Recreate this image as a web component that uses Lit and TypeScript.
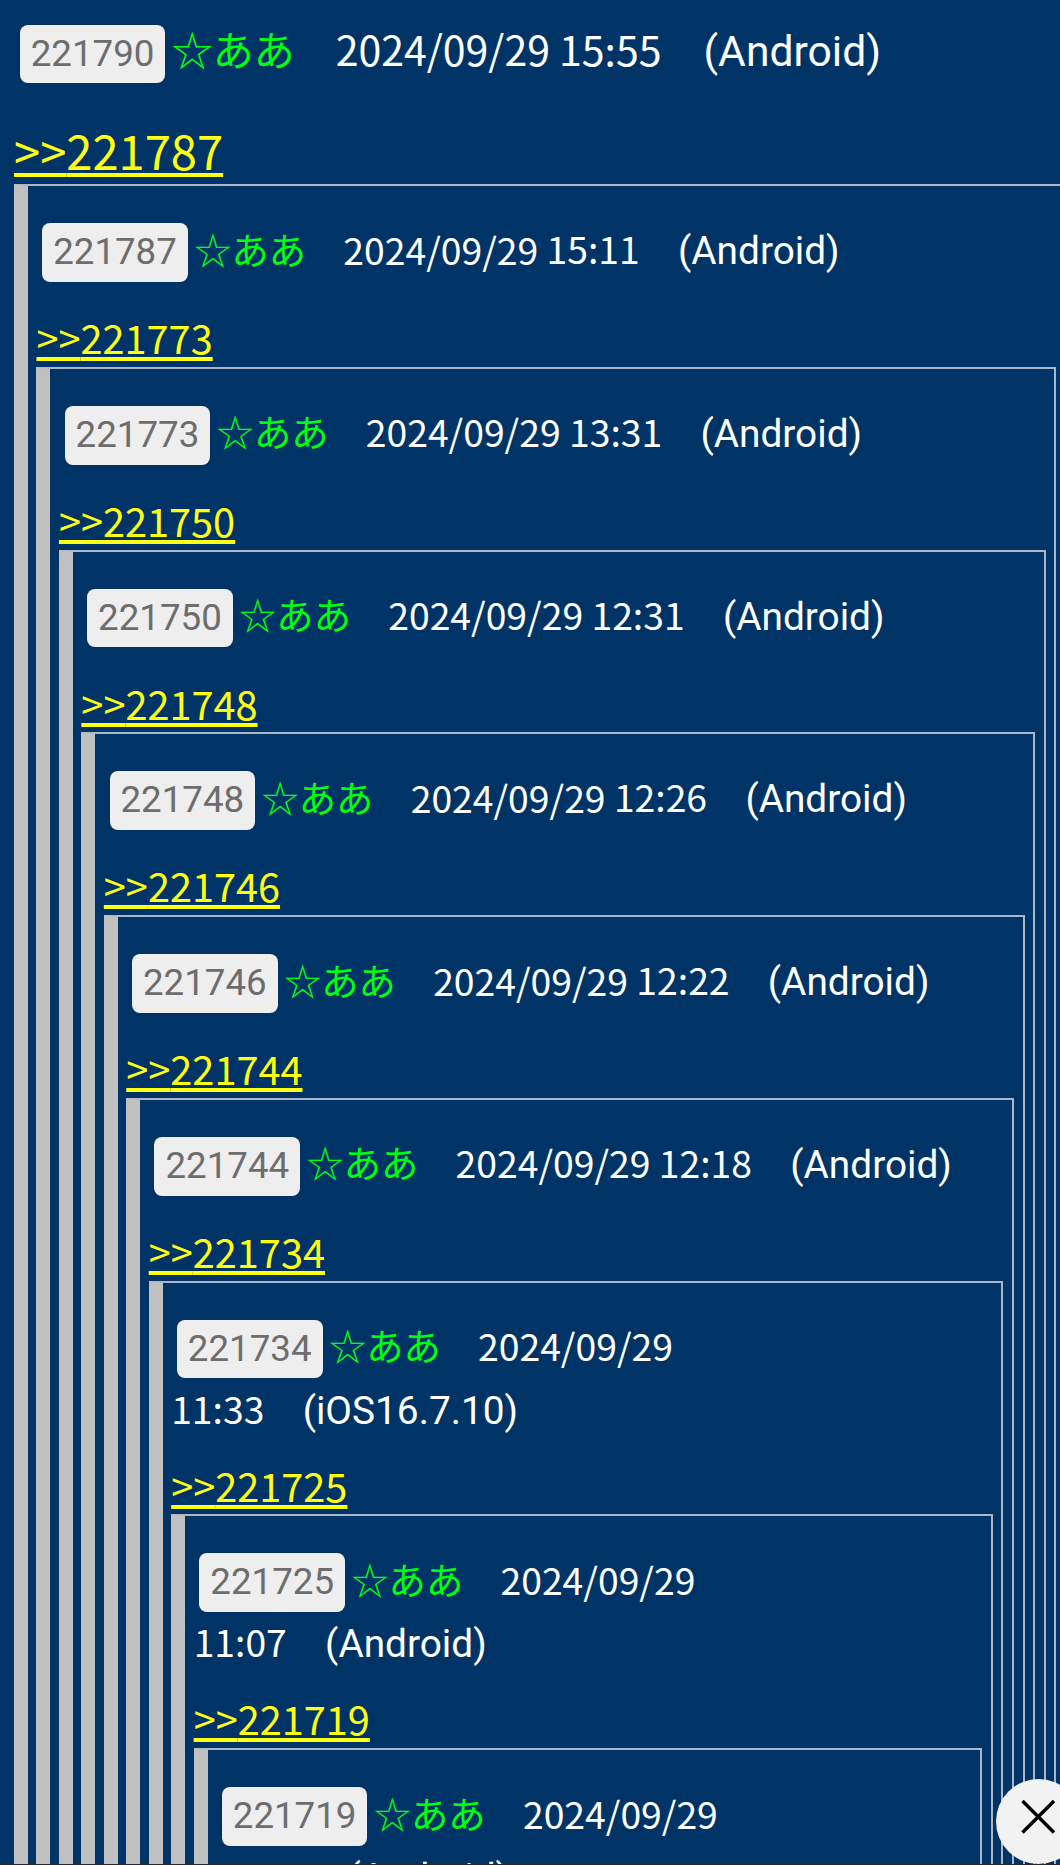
import { LitElement, html, css, nothing, TemplateResult } from "lit";
import { customElement } from "lit/decorators.js";

interface Post {
  id: string;
  date: string;
  time: string;
  device: string;
  reply?: string;
}

const posts: Post[] = [
  { id: "221790", date: "2024/09/29", time: "15:55", device: "Android", reply: "221787" },
  { id: "221787", date: "2024/09/29", time: "15:11", device: "Android", reply: "221773" },
  { id: "221773", date: "2024/09/29", time: "13:31", device: "Android", reply: "221750" },
  { id: "221750", date: "2024/09/29", time: "12:31", device: "Android", reply: "221748" },
  { id: "221748", date: "2024/09/29", time: "12:26", device: "Android", reply: "221746" },
  { id: "221746", date: "2024/09/29", time: "12:22", device: "Android", reply: "221744" },
  { id: "221744", date: "2024/09/29", time: "12:18", device: "Android", reply: "221734" },
  { id: "221734", date: "2024/09/29", time: "11:33", device: "iOS16.7.10", reply: "221725" },
  { id: "221725", date: "2024/09/29", time: "11:07", device: "Android", reply: "221719" },
  { id: "221719", date: "2024/09/29", time: "11:03", device: "Android" },
];

@customElement("app-root")
export class AppRoot extends LitElement {
  static styles = css`
    :host {
      display: block;
      position: relative;
      box-sizing: border-box;
      height: 1865px;
      overflow: hidden;
      border-bottom: 1px solid #25262b;
      background: #003466;
      color: #fff;
      font-family: "Noto Sans CJK JP", sans-serif;
    }
    .thread {
      width: 1053px;
      padding-left: 14px;
    }
    .header {
      margin: 0;
      font-size: 37.3px;
      line-height: 51px;
    }
    .root-header {
      font-size: 41px;
      padding-top: 20px;
    }
    .badge {
      display: inline-block;
      height: 58.7px;
      margin: 4.5px 6.3px 4.2px 5.7px;
      padding: 0 11px;
      border-radius: 8px;
      background: #eee;
      color: #6d6d6d;
      font-family: Roboto, sans-serif;
      font-size: 36.7px;
      line-height: 58.7px;
    }
    .name {
      color: #0f1;
    }
    .when {
      white-space: nowrap;
    }
    .device {
      margin-left: 1px;
      font-family: Roboto, sans-serif;
      font-size: 1.04em;
      line-height: 1;
    }
    .reply {
      display: block;
      width: fit-content;
      margin: 29.2px 0 7.7px;
      color: #ff1;
      font-size: 39.7px;
      line-height: 44px;
      text-decoration: underline;
      text-decoration-thickness: 4px;
      text-underline-offset: 3px;
      text-decoration-skip-ink: none;
    }
    .root-reply {
      margin: 40.4px 0 12.4px;
      font-size: 47.1px;
    }
    .quote {
      margin: 0;
      border: 2px solid #a9b7c8;
      border-left: 14px solid #c0c0c0;
      padding: 32.5px 8.6px 0 8.46px;
    }
    .last {
      padding-bottom: 60px;
    }
    .close {
      position: absolute;
      left: 996px;
      top: 1779px;
      width: 85px;
      height: 85px;
      border: 0;
      padding: 0;
      border-radius: 50%;
      background: #f2f2f2;
    }
    .close svg {
      display: block;
    }
  `;

  private post(index: number): TemplateResult | typeof nothing {
    const p = posts[index];
    if (!p) return nothing;
    const root = index === 0;
    return html`<p class="header ${root ? "root-header" : ""} ${p.reply ? "" : "last"}"><span class="badge">${p.id}</span><span class="name">☆ああ</span>　${p.date} <span class="when">${p.time}　<span class="device">(${p.device})</span></span></p>
      ${p.reply
        ? html`<a class="reply ${root ? "root-reply" : ""}">&gt;&gt;${p.reply}</a>
            <blockquote class="quote">${this.post(index + 1)}</blockquote>`
        : nothing}`;
  }

  render() {
    return html`<main class="thread">${this.post(0)}</main>
      <button class="close" aria-label="Close">
        <svg width="85" height="85" viewBox="0 0 85 85">
          <path d="M26.5 22 L58 53.5 M58 22 L26.5 53.5" stroke="#000" stroke-width="3.4" fill="none" />
        </svg>
      </button>`;
  }
}
